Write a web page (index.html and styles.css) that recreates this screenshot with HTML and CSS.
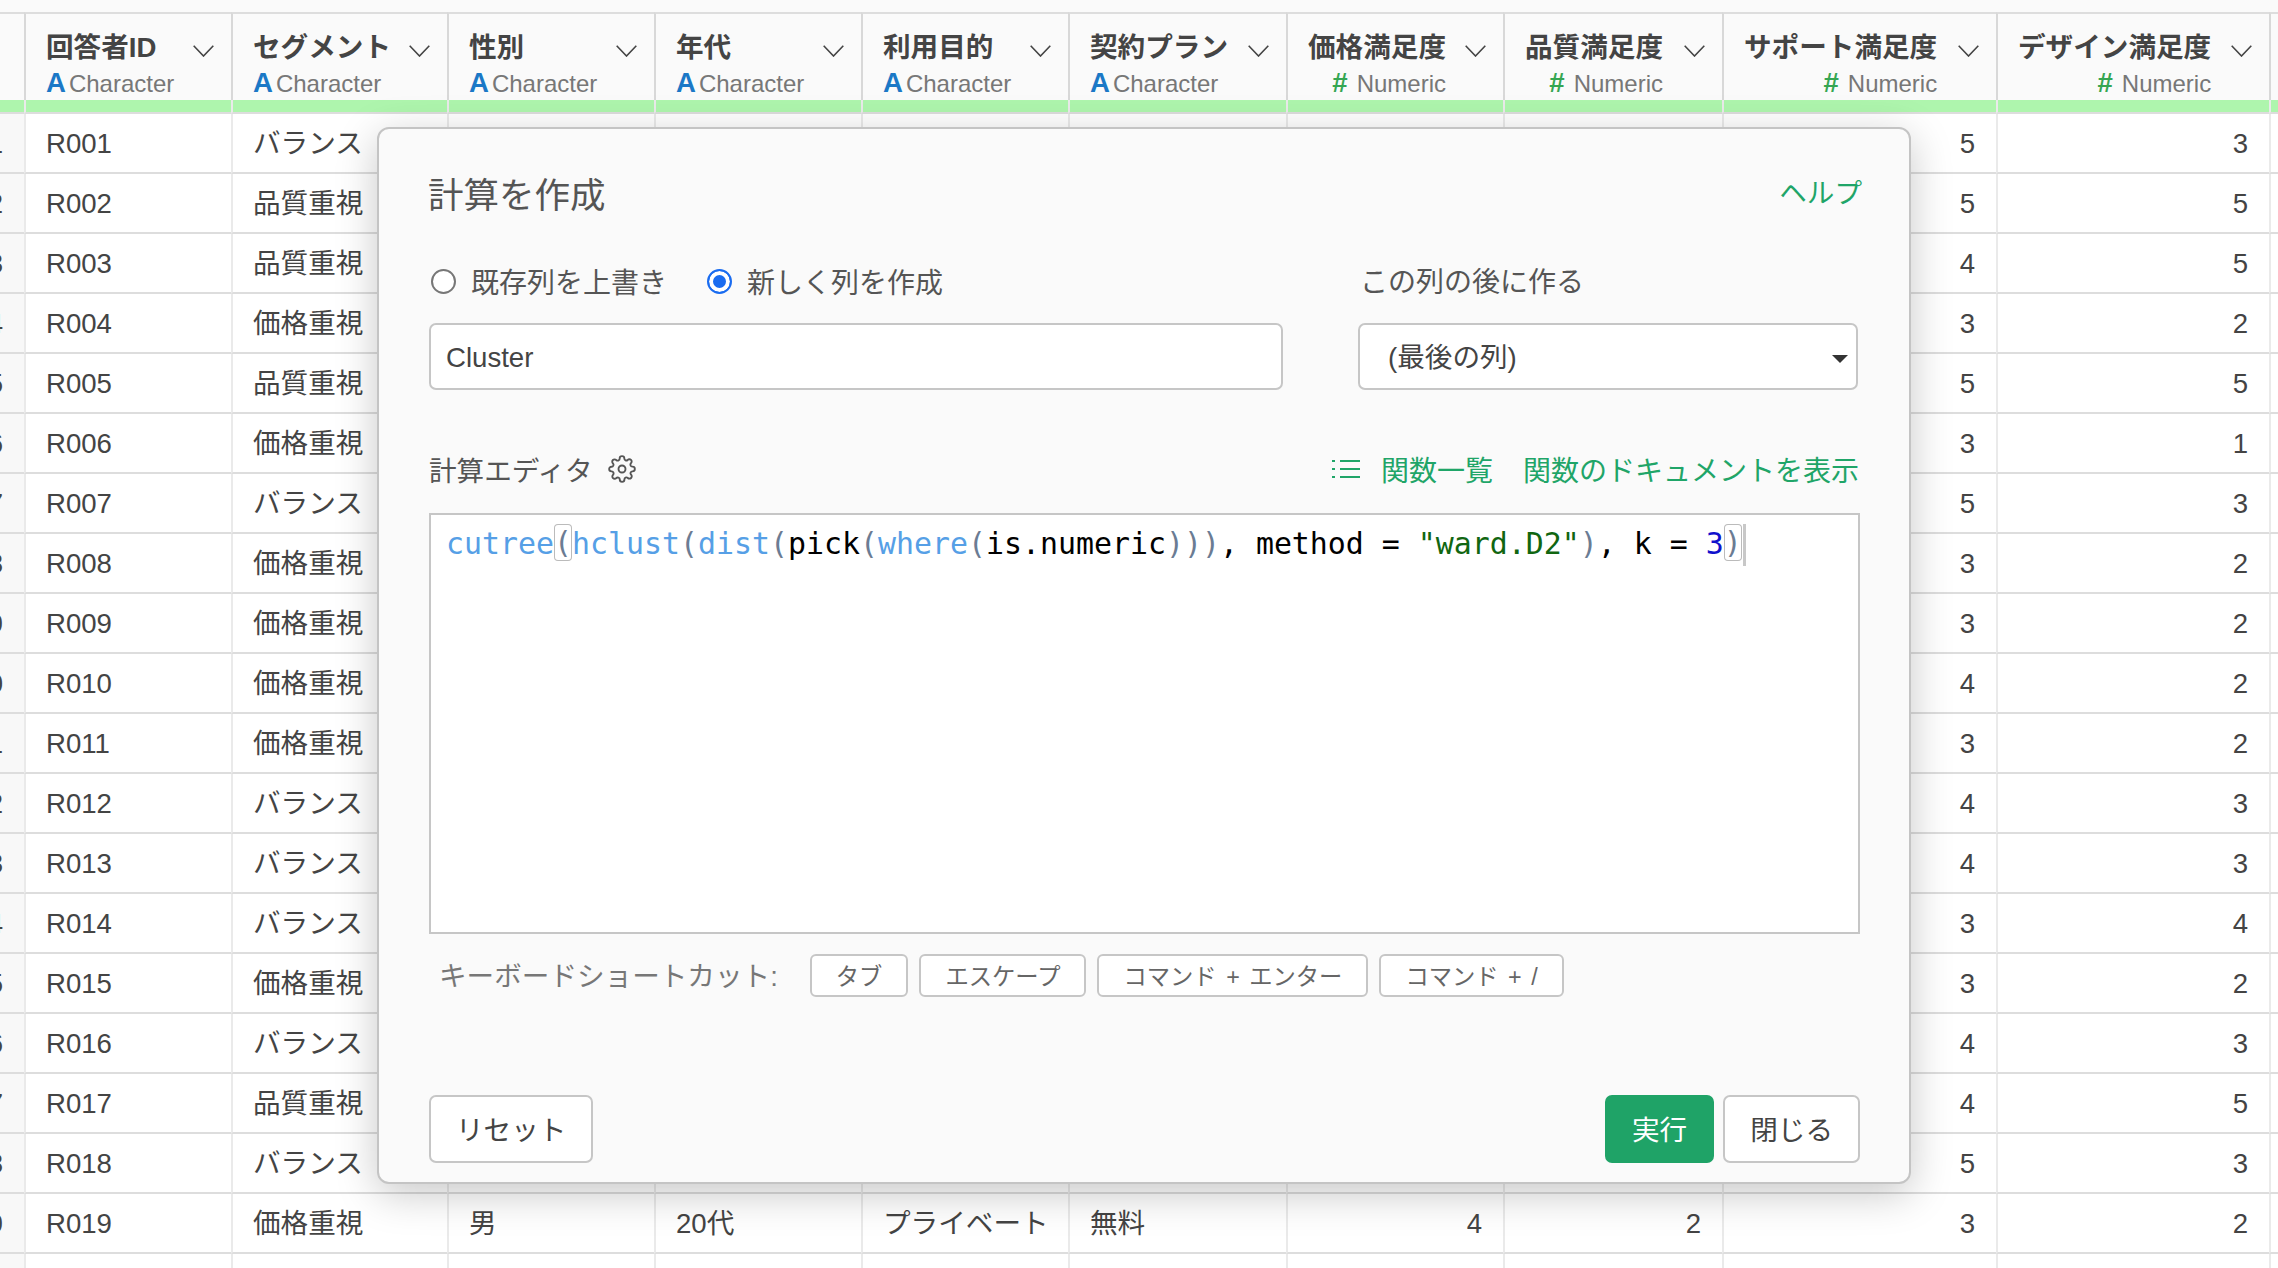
FILE: index.html
```html
<!DOCTYPE html>
<html lang="ja">
<head>
<meta charset="utf-8">
<title>計算を作成</title>
<link rel="stylesheet" href="styles.css">
</head>
<body>
<div class="sheet">
<table class="grid">
<colgroup><col class="c-idx"><col class="c-id"><col class="c-seg"><col class="c-std"><col class="c-std"><col class="c-std"><col class="c-plan"><col class="c-price"><col class="c-quality"><col class="c-support"><col class="c-design"><col class="c-rest"></colgroup>
<thead>
<tr>
<th class="idx"></th>
<th><div class="head"><div class="titles"><div class="name">回答者ID</div><div class="type"><b class="t-a">A</b>Character</div></div><svg class="chev" viewBox="0 0 21 12"><path d="M.7.7 10.500 11 20.300.7"/></svg></div></th>
<th><div class="head"><div class="titles"><div class="name">セグメント</div><div class="type"><b class="t-a">A</b>Character</div></div><svg class="chev" viewBox="0 0 21 12"><path d="M.7.7 10.500 11 20.300.7"/></svg></div></th>
<th><div class="head"><div class="titles"><div class="name">性別</div><div class="type"><b class="t-a">A</b>Character</div></div><svg class="chev" viewBox="0 0 21 12"><path d="M.7.7 10.500 11 20.300.7"/></svg></div></th>
<th><div class="head"><div class="titles"><div class="name">年代</div><div class="type"><b class="t-a">A</b>Character</div></div><svg class="chev" viewBox="0 0 21 12"><path d="M.7.7 10.500 11 20.300.7"/></svg></div></th>
<th><div class="head"><div class="titles"><div class="name">利用目的</div><div class="type"><b class="t-a">A</b>Character</div></div><svg class="chev" viewBox="0 0 21 12"><path d="M.7.7 10.500 11 20.300.7"/></svg></div></th>
<th><div class="head"><div class="titles"><div class="name">契約プラン</div><div class="type"><b class="t-a">A</b>Character</div></div><svg class="chev" viewBox="0 0 21 12"><path d="M.7.7 10.500 11 20.300.7"/></svg></div></th>
<th><div class="head"><div class="titles num"><div class="name">価格満足度</div><div class="type"><b class="t-n">#</b>Numeric</div></div><svg class="chev" viewBox="0 0 21 12"><path d="M.7.7 10.500 11 20.300.7"/></svg></div></th>
<th><div class="head"><div class="titles num"><div class="name">品質満足度</div><div class="type"><b class="t-n">#</b>Numeric</div></div><svg class="chev" viewBox="0 0 21 12"><path d="M.7.7 10.500 11 20.300.7"/></svg></div></th>
<th><div class="head"><div class="titles num"><div class="name">サポート満足度</div><div class="type"><b class="t-n">#</b>Numeric</div></div><svg class="chev" viewBox="0 0 21 12"><path d="M.7.7 10.500 11 20.300.7"/></svg></div></th>
<th><div class="head"><div class="titles num"><div class="name">デザイン満足度</div><div class="type"><b class="t-n">#</b>Numeric</div></div><svg class="chev" viewBox="0 0 21 12"><path d="M.7.7 10.500 11 20.300.7"/></svg></div></th>
<th></th>
</tr>
<tr class="band"><td class="idx"></td><td></td><td></td><td></td><td></td><td></td><td></td><td></td><td></td><td></td><td></td><td></td></tr>
</thead>
<tbody>
<tr><td class="idx">1</td><td>R001</td><td>バランス</td><td></td><td></td><td></td><td></td><td></td><td></td><td class="n">5</td><td class="n">3</td><td></td></tr>
<tr><td class="idx">2</td><td>R002</td><td>品質重視</td><td></td><td></td><td></td><td></td><td></td><td></td><td class="n">5</td><td class="n">5</td><td></td></tr>
<tr><td class="idx">3</td><td>R003</td><td>品質重視</td><td></td><td></td><td></td><td></td><td></td><td></td><td class="n">4</td><td class="n">5</td><td></td></tr>
<tr><td class="idx">4</td><td>R004</td><td>価格重視</td><td></td><td></td><td></td><td></td><td></td><td></td><td class="n">3</td><td class="n">2</td><td></td></tr>
<tr><td class="idx">5</td><td>R005</td><td>品質重視</td><td></td><td></td><td></td><td></td><td></td><td></td><td class="n">5</td><td class="n">5</td><td></td></tr>
<tr><td class="idx">6</td><td>R006</td><td>価格重視</td><td></td><td></td><td></td><td></td><td></td><td></td><td class="n">3</td><td class="n">1</td><td></td></tr>
<tr><td class="idx">7</td><td>R007</td><td>バランス</td><td></td><td></td><td></td><td></td><td></td><td></td><td class="n">5</td><td class="n">3</td><td></td></tr>
<tr><td class="idx">8</td><td>R008</td><td>価格重視</td><td></td><td></td><td></td><td></td><td></td><td></td><td class="n">3</td><td class="n">2</td><td></td></tr>
<tr><td class="idx">9</td><td>R009</td><td>価格重視</td><td></td><td></td><td></td><td></td><td></td><td></td><td class="n">3</td><td class="n">2</td><td></td></tr>
<tr><td class="idx">10</td><td>R010</td><td>価格重視</td><td></td><td></td><td></td><td></td><td></td><td></td><td class="n">4</td><td class="n">2</td><td></td></tr>
<tr><td class="idx">11</td><td>R011</td><td>価格重視</td><td></td><td></td><td></td><td></td><td></td><td></td><td class="n">3</td><td class="n">2</td><td></td></tr>
<tr><td class="idx">12</td><td>R012</td><td>バランス</td><td></td><td></td><td></td><td></td><td></td><td></td><td class="n">4</td><td class="n">3</td><td></td></tr>
<tr><td class="idx">13</td><td>R013</td><td>バランス</td><td></td><td></td><td></td><td></td><td></td><td></td><td class="n">4</td><td class="n">3</td><td></td></tr>
<tr><td class="idx">14</td><td>R014</td><td>バランス</td><td></td><td></td><td></td><td></td><td></td><td></td><td class="n">3</td><td class="n">4</td><td></td></tr>
<tr><td class="idx">15</td><td>R015</td><td>価格重視</td><td></td><td></td><td></td><td></td><td></td><td></td><td class="n">3</td><td class="n">2</td><td></td></tr>
<tr><td class="idx">16</td><td>R016</td><td>バランス</td><td></td><td></td><td></td><td></td><td></td><td></td><td class="n">4</td><td class="n">3</td><td></td></tr>
<tr><td class="idx">17</td><td>R017</td><td>品質重視</td><td></td><td></td><td></td><td></td><td></td><td></td><td class="n">4</td><td class="n">5</td><td></td></tr>
<tr><td class="idx">18</td><td>R018</td><td>バランス</td><td></td><td></td><td></td><td></td><td></td><td></td><td class="n">5</td><td class="n">3</td><td></td></tr>
<tr><td class="idx">19</td><td>R019</td><td>価格重視</td><td>男</td><td>20代</td><td>プライベート</td><td>無料</td><td class="n">4</td><td class="n">2</td><td class="n">3</td><td class="n">2</td><td></td></tr>
<tr><td class="idx"></td><td></td><td></td><td></td><td></td><td></td><td></td><td></td><td></td><td></td><td></td><td></td></tr>
</tbody>
</table>
</div>

<div class="dialog">
  <header class="dlg-head">
    <h1 class="dlg-title">計算を作成</h1>
    <a class="link help">ヘルプ</a>
  </header>

  <div class="form">
    <div class="radios">
      <label class="radio"><span class="dot"></span>既存列を上書き</label>
      <label class="radio"><span class="dot on"></span>新しく列を作成</label>
    </div>
    <div class="after-label">この列の後に作る</div>
    <div class="field"><span class="field-text">Cluster</span></div>
    <div class="field select">(最後の列)<span class="caret"></span></div>
  </div>

  <div class="toolbar">
    <div class="tool-left">計算エディタ
      <svg class="gear" viewBox="0 0 24 24"><circle cx="12" cy="12" r="3"/><path d="M19.4 15a1.65 1.65 0 0 0 .33 1.82l.06.06a2 2 0 0 1 0 2.83 2 2 0 0 1-2.83 0l-.06-.06a1.65 1.65 0 0 0-1.82-.33 1.65 1.65 0 0 0-1 1.51V21a2 2 0 0 1-2 2 2 2 0 0 1-2-2v-.09A1.65 1.65 0 0 0 9 19.4a1.65 1.65 0 0 0-1.82.33l-.06.06a2 2 0 0 1-2.83 0 2 2 0 0 1 0-2.83l.06-.06a1.65 1.65 0 0 0 .33-1.82 1.65 1.65 0 0 0-1.51-1H3a2 2 0 0 1-2-2 2 2 0 0 1 2-2h.09A1.65 1.65 0 0 0 4.6 9a1.65 1.65 0 0 0-.33-1.82l-.06-.06a2 2 0 0 1 0-2.83 2 2 0 0 1 2.83 0l.06.06a1.65 1.65 0 0 0 1.82.33H9a1.65 1.65 0 0 0 1-1.51V3a2 2 0 0 1 2-2 2 2 0 0 1 2 2v.09a1.65 1.65 0 0 0 1 1.51 1.65 1.65 0 0 0 1.82-.33l.06-.06a2 2 0 0 1 2.83 0 2 2 0 0 1 0 2.83l-.06.06a1.65 1.65 0 0 0-.33 1.82V9a1.65 1.65 0 0 0 1.51 1H21a2 2 0 0 1 2 2 2 2 0 0 1-2 2h-.09a1.65 1.65 0 0 0-1.51 1z"/></svg>
    </div>
    <div class="tool-right">
      <a class="link fn-list"><svg class="list" viewBox="0 0 28 20"><path d="M8 2H28M8 10H28M8 18H28M0 2H3M0 10H3M0 18H3"/></svg>関数一覧</a>
      <a class="link">関数のドキュメントを表示</a>
    </div>
  </div>

  <div class="editor"><span class="kw">cutree</span><span class="pr match">(</span><span class="kw">hclust</span><span class="pr">(</span><span class="kw">dist</span><span class="pr">(</span>pick<span class="pr">(</span><span class="kw">where</span><span class="pr">(</span>is.numeric<span class="pr">)))</span>, method = <span class="st">"ward.D2"</span><span class="pr">)</span>, k = <span class="nm">3</span><span class="pr match">)</span><span class="cursor"></span></div>

  <div class="shortcuts">
    <span class="sc-label">キーボードショートカット:</span>
    <span class="chip">タブ</span>
    <span class="chip">エスケープ</span>
    <span class="chip">コマンド + エンター</span>
    <span class="chip">コマンド + /</span>
  </div>

  <footer class="dlg-foot">
    <button class="btn">リセット</button>
    <div class="foot-right">
      <button class="btn primary">実行</button>
      <button class="btn">閉じる</button>
    </div>
  </footer>
</div>
</body>
</html>
```
FILE: styles.css
```css
* { box-sizing: border-box; }
html, body { margin: 0; height: 100%; }
body {
  background: #fafafa;
  overflow: hidden;
  color: #444;
  font-family: "Liberation Sans", "Noto Sans CJK JP", sans-serif;
  font-size: 27.6px;
  position: relative;
}
.sheet { padding-top: 12px; margin-left: -40px; }
.grid { border-collapse: separate; border-spacing: 0; table-layout: fixed; width: 2358px; }
.c-idx { width: 64px; }
.c-id { width: 207px; }
.c-seg { width: 216px; }
.c-std { width: 207px; }
.c-plan { width: 218px; }
.c-price { width: 217px; }
.c-quality { width: 219px; }
.c-support { width: 274px; }
.c-design { width: 273px; }
.c-rest { width: 49px; }
.grid th {
  height: 88px;
  padding: 0 17px 0 20px;
  background: #fafafa;
  border-top: 2px solid #ddd;
  border-left: 2px solid #d8d8d8;
  vertical-align: top;
  text-align: left;
  font-weight: 400;
}
.grid th.idx { border-left: 0; }
.head { display: flex; justify-content: space-between; align-items: flex-start; }
.titles { display: flex; flex-direction: column; align-items: flex-start; }
.titles.num { align-items: flex-end; }
.name { font-weight: 700; line-height: 32px; margin-top: 18px; white-space: nowrap; color: #444; }
.type { font-size: 24px; line-height: 28px; margin-top: 5px; color: #777; white-space: nowrap; }
.t-a { color: #1b78c6; font-size: 27.600px; margin-right: 3px; }
.t-n { color: #35a652; font-size: 27.600px; margin-right: 9px; }
.chev { width: 21px; height: 12px; margin-top: 31px; flex: none; }
.chev path { fill: none; stroke: #444; stroke-width: 1.6; }
.band td {
  height: 14px;
  padding: 0;
  background: #aef5ad;
  border-left-color: #a0e0a0;
  border-bottom: 2px solid #ddd;
}
.grid td {
  border-left: 2px solid #eaeaea;
  border-bottom: 2px solid #ddd;
}
.band td.idx { background: #aef5ad; }
.grid tbody td {
  height: 60px;
  padding: 2px 21px 0 20px;
  background: #fff;
  line-height: 30px;
  white-space: nowrap;
}
.grid tbody td.n { text-align: right; }
.grid tbody td.idx {
  background: #f8f8f8;
  border-left: 0;
  text-align: right;
  padding: 2px 21px 0 0;
}
.band td.idx { border-left: 0; }

.dialog {
  position: absolute;
  left: 377px;
  top: 127px;
  width: 1534px;
  height: 1057px;
  display: flex;
  flex-direction: column;
  padding: 0 49px 19px 50px;
  background: #fafafa;
  border: 2px solid #c4c4c4;
  border-radius: 12px;
  box-shadow: 0 10px 42px rgba(0, 0, 0, .22);
}
.dlg-head { display: flex; justify-content: space-between; align-items: center; margin-top: 42px; height: 48px; }
.dlg-title { margin: 2px 0 0 -1px; font-size: 35.500px; font-weight: 400; line-height: 48px; color: #555; }
.link { color: #1fa568; white-space: nowrap; }
.help { margin: -8px -2px 0 0; }
.form {
  display: grid;
  grid-template-columns: 854px 500px;
  column-gap: 75px;
  row-gap: 25px;
  margin-top: 47px;
  color: #555;
}
.radios { display: flex; gap: 38px; height: 32px; padding-bottom: 2px; align-items: center; font-size: 28px; }
.radio { display: flex; align-items: center; gap: 15px; white-space: nowrap; }
.dot {
  width: 25px;
  height: 25px;
  margin-left: 2px;
  border-radius: 50%;
  border: 2px solid #777;
  background: #fff;
}
.dot.on { border: 2px solid #1a6cf0; box-shadow: inset 0 0 0 4px #fff; background: #1a6cf0; }
.after-label { height: 32px; line-height: 30px; padding: 2px 0 0 2px; font-size: 28px; }
.field {
  position: relative;
  height: 67px;
  padding: 0 15px;
  display: flex;
  align-items: center;
  background: #fff;
  border: 2px solid #c6c6c6;
  border-radius: 7px;
  color: #444;
}
.field-text { padding-top: 2px; }
.select { padding: 0 0 3px 28px; }
.caret {
  position: absolute;
  right: 8px;
  top: 30px;
  border-left: 8px solid transparent;
  border-right: 8px solid transparent;
  border-top: 8px solid #333;
}
.toolbar { display: flex; justify-content: space-between; align-items: center; height: 32px; margin-top: 63px; }
.tool-left { display: flex; align-items: center; gap: 14px; color: #555; }
.gear { width: 28px; height: 28px; fill: none; stroke: #555; stroke-width: 1.6; margin-left: 1px; }
.tool-right { display: flex; gap: 30px; margin-right: 1px; font-size: 28px; }
.fn-list { display: flex; align-items: center; gap: 21px; }
.list { width: 28px; height: 20px; fill: none; stroke: #1fa568; stroke-width: 2; }
.editor {
  height: 421px;
  margin-top: 28px;
  padding: 9px 15px;
  background: #fff;
  border: 2px solid #c6c6c6;
  font-family: "DejaVu Sans Mono", monospace;
  font-size: 29.900px;
  line-height: 40px;
  color: #000;
  white-space: pre;
}
.kw { color: #569fe6; }
.pr { color: #6b7c93; }
.st { color: #116611; }
.nm { color: #1111cc; }
.match { box-shadow: inset 0 0 0 1px #bbb; border-radius: 4px; display: inline-block; line-height: 37px; height: 37px; vertical-align: top; }
.cursor { display: inline-block; width: 3px; height: 42px; margin-left: 1px; background: #c8c8c8; vertical-align: top; }
.shortcuts { display: flex; align-items: center; gap: 11px; margin-top: 20px; height: 43px; padding-left: 10px; }
.sc-label { color: #777; margin-right: 21px; padding-bottom: 4px; white-space: nowrap; }
.chip {
  height: 43px;
  padding: 0 24px 2px;
  display: flex;
  align-items: center;
  background: #fff;
  border: 2px solid #c6c6c6;
  border-radius: 6px;
  font-size: 23.300px;
  word-spacing: 3px;
  color: #666;
  white-space: nowrap;
}
.dlg-foot { margin-top: auto; display: flex; justify-content: space-between; align-items: flex-end; }
.foot-right { display: flex; gap: 9px; }
.btn {
  height: 68px;
  padding: 0 25px 3px;
  background: #fff;
  border: 2px solid #c6c6c6;
  border-radius: 7px;
  color: #444;
  font: inherit;
}
.btn.primary { background: #1fa367; border-color: #1fa367; color: #fff; }
```
